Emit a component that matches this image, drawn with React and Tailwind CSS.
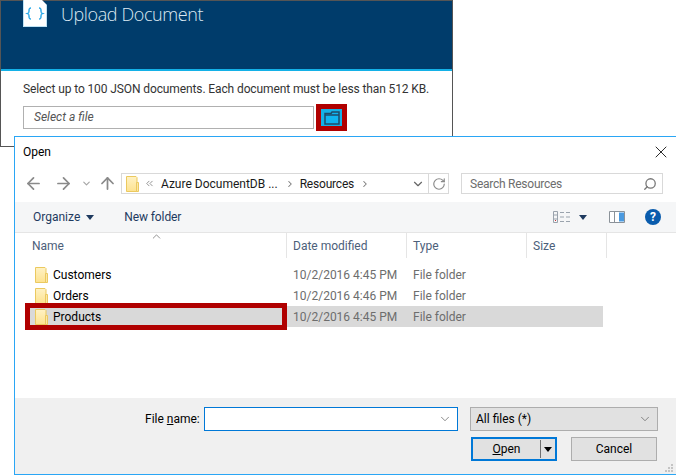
import React from "react";
import { ArrowLeft, ArrowRight, ArrowUp, ChevronDown, ChevronUp, ChevronRight, ChevronsLeft, RotateCw, Search, X } from "lucide-react";

const files = [
  { name: "Customers", date: "10/2/2016 4:45 PM" },
  { name: "Orders", date: "10/2/2016 4:46 PM" },
  { name: "Products", date: "10/2/2016 4:45 PM", selected: true },
];

const FolderIcon = ({ className }) => (
  <svg className={className} width="13" height="16" viewBox="0 0 13 16">
    <defs>
      <linearGradient id="fold" x1="0" y1="0" x2="0" y2="1">
        <stop offset="0" stopColor="#fff2c4" />
        <stop offset="1" stopColor="#fde28f" />
      </linearGradient>
    </defs>
    <path d="M.5.500h9.500l1 1v14H.5z" fill="url(#fold)" stroke="#ebc95f" />
    <path d="M10.500 6.500h2v9h-2z" fill="#fbe6a6" stroke="#ebc95f" />
  </svg>
);

const DownCaret = ({ className }) => (
  <svg className={className} width="8" height="5" viewBox="0 0 8 5">
    <path d="M0 0h8L4 5z" fill="#1e3a5f" />
  </svg>
);

const App = () => {
  return (
    <div className="relative w-[676px] h-[475px] overflow-hidden bg-white font-['Roboto',sans-serif] text-[12px]">
      {/* upload blade behind the dialog */}
      <div className="w-[453px] h-[147px] border border-[#555555] bg-white">
        <div className="h-[68px] bg-[#003c6b] flex items-start pl-[22px]">
          <svg width="24" height="27" viewBox="0 0 24 27" className="-mt-px">
            <path d="M0 0h19l5 5v22H0z" fill="#ffffff" />
            <path d="M1 26h22V5h1v22H0V0h1z" fill="#bfe3f5" />
            <path d="M8 8c-2 0-2 1-2 3s0 2-1.500 2.500C6 14 6 14 6 16s0 3 2 3M16 8c2 0 2 1 2 3s0 2 1.500 2.500C18 14 18 14 18 16s0 3-2 3" fill="none" stroke="#2aa9e8" strokeWidth="1.500" />
          </svg>
          <span className="ml-[14px] text-[18px] leading-[26px] font-['Open_Sans',sans-serif] font-light tracking-[-0.4px] text-[#dce9f2]">
            Upload Document
          </span>
        </div>
        <div className="h-[2px] bg-[#14b1e7]" />
        <div className="pl-[22px] pt-[9px]">
          <p className="text-[#333333] leading-[18px] tracking-[-0.11px] whitespace-nowrap">
            Select up to 100 JSON documents. Each document must be less than 512 KB.
          </p>
          <div className="flex items-center mt-[6px] h-[27px]">
            <div className="w-[291px] h-[23px] border border-[#b0b0b0] pl-[10px] italic text-[#555555] leading-[21px]">
              Select a file
            </div>
            <div className="ml-[2px] w-[31px] h-[27px] border-[5px] border-[#b00000] bg-[#14b1e7] flex items-center justify-center">
              <svg width="16" height="14" viewBox="0 0 16 14">
                <path d="M1 13V2.500h6l1-1.500h7v12z" fill="#10b4f0" stroke="#1f4a68" strokeWidth="1.500" />
                <path d="M1 4h14" stroke="#1f4a68" strokeWidth="1.500" />
              </svg>
            </div>
          </div>
        </div>
      </div>

      {/* file dialog */}
      <div className="absolute left-[14px] top-[136px] w-[663px] h-[339px] border border-[#2aa6f5] bg-white flex flex-col">
        <div className="h-[30px] shrink-0 flex items-center justify-between pl-[8px] pr-[5px] text-black">
          <span>Open</span>
          <X size={20} strokeWidth={1} className="text-black" />
        </div>

        <div className="h-[35px] shrink-0 flex items-start pt-[6px] text-[#8a8a8a]">
          <div className="w-[106px] h-[21px] flex items-center pl-[9px]">
            <ArrowLeft size={19} strokeWidth={2.2} />
            <ArrowRight size={19} strokeWidth={2.2} className="ml-[11px]" />
            <ChevronDown size={11} strokeWidth={2.5} className="ml-[8px] text-[#a5a5a5]" />
            <ArrowUp size={19} strokeWidth={2.2} className="ml-[6px]" />
          </div>
          <div className="w-[328px] h-[21px] border border-[#d9d9d9] flex items-center text-[#1a1a1a]">
            <FolderIcon className="ml-[4px] shrink-0" />
            <ChevronsLeft size={11} className="ml-[5px] text-[#8a8a8a]" />
            <span className="ml-[6px] whitespace-nowrap">Azure DocumentDB ...</span>
            <ChevronRight size={10} strokeWidth={2.5} className="ml-[7px] text-[#777777]" />
            <span className="ml-[5px] tracking-[-0.2px]">Resources</span>
            <ChevronRight size={10} strokeWidth={2.5} className="ml-[6px] text-[#777777]" />
            <ChevronDown size={14} strokeWidth={2} className="ml-auto mr-[3px] text-[#666666]" />
            <div className="w-[20px] h-full border-l border-[#d9d9d9] flex items-center justify-center">
              <RotateCw size={14} className="text-[#8a8a8a]" />
            </div>
          </div>
          <div className="ml-[12px] w-[202px] h-[21px] border border-[#d9d9d9] flex items-center justify-between pl-[8px] pr-[5px] text-[#6d6d6d]">
            <span className="tracking-[-0.25px]">Search Resources</span>
            <Search size={14} strokeWidth={2.2} className="-scale-x-100 text-[#777777]" />
          </div>
        </div>

        <div className="h-[31px] shrink-0 bg-[#f5f6f7] border-b border-[#e5e5e5] flex items-center pl-[18px] text-[#1e3a5f]">
          <span>Organize</span>
          <DownCaret className="ml-[6px]" />
          <span className="ml-[30px] tracking-[-0.1px]">New folder</span>
          <svg className="ml-auto" width="17" height="12" viewBox="0 0 17 12">
            <path d="M.5.500h4v11h-4zM.5 4h4M.5 8h4M7 1.500h4M13 1.500h4M7 6h4M13 6h4M7 10.500h4M13 10.500h4" fill="none" stroke="#9aa3ad" />
            <path d="M2 9.500h1" stroke="#cc3333" />
          </svg>
          <DownCaret className="ml-[9px]" />
          <svg className="ml-[22px]" width="16" height="12" viewBox="0 0 16 12">
            <path d="M.5.500h15v11H.5z" fill="#ffffff" stroke="#8b9299" />
            <path d="M5.500 1v10" stroke="#8b9299" />
            <path d="M10 1.500h5v9h-5z" fill="#4a9ae0" />
          </svg>
          <div className="ml-[20px] mr-[15px] w-[16px] h-[16px] rounded-full bg-[#0a5cad] text-white font-bold text-[12px] leading-[16px] text-center">
            ?
          </div>
        </div>

        <div className="relative h-[25px] shrink-0 flex text-[#4c607a] leading-[26px]">
          <ChevronUp size={13} strokeWidth={1.3} className="absolute left-[135px] -top-[3px] text-[#666666]" />
          <div className="w-[272px] pl-[17px] border-r border-[#e5e5e5]">Name</div>
          <div className="w-[120px] pl-[6px] border-r border-[#e5e5e5]">Date modified</div>
          <div className="w-[120px] pl-[6px] border-r border-[#e5e5e5]">Type</div>
          <div className="w-[80px] pl-[6px] border-r border-[#e5e5e5]">Size</div>
        </div>

        <div className="flex-1 pt-[6px] pl-[15px]">
          {files.map((file) => (
            <div
              key={file.name}
              className={`w-[573px] h-[21px] grid grid-cols-[263px_120px_120px_70px] items-center ${
                file.selected ? "bg-[#d9d9d9]" : ""
              }`}
            >
              <div className="flex items-center pl-[5px] text-black">
                <FolderIcon />
                <span className="ml-[5px]">{file.name}</span>
              </div>
              <div className="text-[#6d6d6d]">{file.date}</div>
              <div className="text-[#6d6d6d]">File folder</div>
              <div />
            </div>
          ))}
        </div>

        {/* red callout round the selected row */}
        <div className="absolute left-[10px] top-[166px] w-[262px] h-[27px] border-[5px] border-[#b00000]" />

        <div className="relative h-[76px] shrink-0 bg-[#f0f0f0] text-black">
          <div className="flex items-center pt-[9px] h-[33px]">
            <span className="ml-[130px] w-[59px] whitespace-nowrap">
              File <span className="underline">n</span>ame:
            </span>
            <div className="w-[254px] h-[24px] bg-white border border-[#0078d7] flex items-center justify-end pr-[5px]">
              <ChevronDown size={14} strokeWidth={1.3} className="text-[#666666]" />
            </div>
            <div className="ml-[12px] w-[188px] h-[24px] bg-[#e1e1e1] border border-[#adadad] flex items-center justify-between pl-[5px] pr-[5px]">
              <span>All files (*)</span>
              <ChevronDown size={14} strokeWidth={1.3} className="text-[#666666]" />
            </div>
          </div>
          <div className="flex mt-[6px] pl-[456px]">
            <div className="w-[86px] h-[24px] bg-[#e1e1e1] border-2 border-[#0078d7] flex items-center">
              <span className="flex-1 text-center">
                <span className="underline">O</span>pen
              </span>
              <span className="w-px h-[18px] bg-[#707070]" />
              <svg className="mx-[3px]" width="8" height="5" viewBox="0 0 8 5">
                <path d="M0 0h8L4 5z" fill="#000000" />
              </svg>
            </div>
            <div className="ml-[14px] w-[86px] h-[24px] bg-[#e1e1e1] border border-[#adadad] flex items-center justify-center">
              Cancel
            </div>
          </div>
          <svg className="absolute right-[2px] bottom-[1px]" width="10" height="10" viewBox="0 0 10 10">
            <path d="M7 1h2v2H7zM4 4h2v2H4zM7 4h2v2H7zM1 7h2v2H1zM4 7h2v2H4zM7 7h2v2H7z" fill="#c4c4c4" />
          </svg>
        </div>
      </div>
    </div>
  );
};

export default App;
